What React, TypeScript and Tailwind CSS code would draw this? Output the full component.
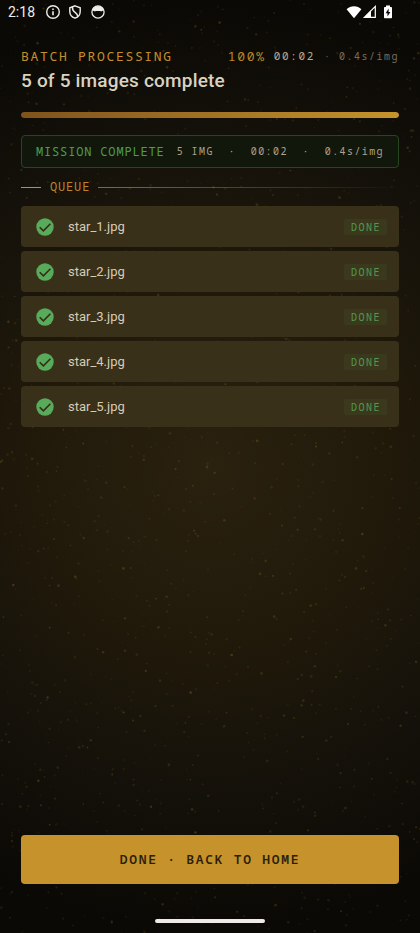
const MONO =
  "font-['Noto_Sans_Mono','Droid_Sans_Mono','DejaVu_Sans_Mono',monospace]"

interface QueueItem {
  id: number
  name: string
}

const QUEUE: QueueItem[] = [
  { id: 1, name: 'star_1.jpg' },
  { id: 2, name: 'star_2.jpg' },
  { id: 3, name: 'star_3.jpg' },
  { id: 4, name: 'star_4.jpg' },
  { id: 5, name: 'star_5.jpg' },
]

// small LCG so the dust is the same on every render
function makeDust(count: number) {
  let seed = 20417
  const next = () => {
    seed = (seed * 1103515245 + 12345) % 2147483648
    return seed / 2147483648
  }
  return Array.from({ length: count }, () => ({
    x: next() * 420,
    y: next() * 933,
    r: 0.7 + next() * 0.7,
    o: 0.06 + next() * next() * 0.24,
  }))
}

const DUST = makeDust(1500)

function Backdrop() {
  return (
    <svg
      className="absolute inset-0 -z-10 h-full w-full"
      viewBox="0 0 420 933"
      preserveAspectRatio="xMidYMid slice"
      aria-hidden="true"
    >
      {DUST.map((d, i) => (
        <circle key={i} cx={d.x} cy={d.y} r={d.r} fill="#a98a2c" opacity={d.o} />
      ))}
    </svg>
  )
}

function StatusBar() {
  return (
    <div className="flex h-6 items-center justify-between pl-2 pr-6 text-[#efece6]">
      <div className="flex items-center">
        <span className="w-[37px] text-sm leading-6">2:18</span>
        <svg className="h-4 w-4" viewBox="0 0 16 16" fill="none" stroke="currentColor">
          <circle cx="8" cy="8" r="6.3" strokeWidth="1.4" />
          <path d="M8 7.2v4M8 4.4v1.6" strokeWidth="1.6" />
        </svg>
        <svg className="ml-1.5 h-4 w-4" viewBox="0 0 16 16" fill="none" stroke="currentColor">
          <path d="M8 1.8l5.2 2v3.7c0 3.2-2.1 5.6-5.2 6.7-3.1-1.1-5.2-3.5-5.2-6.7V3.8z" strokeWidth="1.4" />
          <path d="M5.4 3c0 2.8.6 4 2.4 5.2 1.8 1.2 2.600 2.400 3.200 4.200" strokeWidth="1.5" />
        </svg>
        <svg className="ml-[7px] h-4 w-4" viewBox="0 0 16 16">
          <circle cx="8" cy="8" r="6.1" fill="none" stroke="currentColor" strokeWidth="1.3" />
          <path
            d="M3 4.600a6.200 6.200 0 0 1 10 0l.6 2.600-1.400-.5-1 .8-1.100-.6H5.900l-1.100.6-1-.8-1.400.5z"
            fill="currentColor"
          />
        </svg>
      </div>
      <div className="flex items-center text-white">
        <svg className="h-4 w-4" viewBox="0 0 16 16" fill="currentColor">
          <path d="M8 14.2L.6 5.2C2.6 3.3 5.2 2.2 8 2.2s5.4 1.1 7.4 3z" />
        </svg>
        <svg className="h-4 w-4" viewBox="0 0 16 16">
          <path d="M2.4 13.3L13.3 2.4v10.9z" fill="none" stroke="currentColor" strokeWidth="1.2" />
          <path d="M1.4 13.9L9 6.3v7.6z" fill="currentColor" />
        </svg>
        <svg className="ml-0.5 h-4 w-4" viewBox="0 0 16 16">
          <path
            d="M6 1.6h4v1.300h1.200c.5 0 .8.3.8.8v9.700c0 .5-.3.8-.8.8H4.800c-.5 0-.8-.3-.8-.8V3.700c0-.5.3-.8.8-.8H6z"
            fill="currentColor"
          />
          <path d="M8.600 4.600L5.600 9.200h1.900v3.300l2.900-4.600H8.600z" fill="#0b0905" />
        </svg>
      </div>
    </div>
  )
}

function CheckIcon() {
  return (
    <svg className="h-[18px] w-[18px] shrink-0" viewBox="0 0 18 18" aria-hidden="true">
      <circle cx="9" cy="9" r="8.7" fill="#59ab5c" />
      <path d="M3.700 9.200l3.700 3.600 7-7" fill="none" stroke="#352c18" strokeWidth="1.6" />
    </svg>
  )
}

function QueueRow({ item }: { item: QueueItem }) {
  return (
    <li className="flex h-[41px] items-center rounded bg-[#39301a] pl-[15px] pr-3">
      <CheckIcon />
      <span className="ml-3.5 min-w-0 flex-1 truncate text-[13px] leading-5 text-[#d6cbb5]">
        {item.name}
      </span>
      <span
        className={`${MONO} rounded-xs bg-[#3a391d] pl-[7px] pr-1.5 text-[10px] leading-4 tracking-[0.15em] text-[#539a50]`}
      >
        DONE
      </span>
    </li>
  )
}

export default function App() {
  return (
    <div className="relative isolate flex min-h-screen flex-col overflow-hidden bg-[#0b0905] bg-[radial-gradient(circle_460px_at_50%_50%,#2a210f_0%,#20190a_40%,#14110a_72%,#0b0905_100%)] font-[Roboto,sans-serif]">
      <Backdrop />
      <StatusBar />

      <main className="flex flex-1 flex-col px-[21px] pt-6">
        <header>
          <div className={`${MONO} flex items-center justify-between leading-4`}>
            <p className="text-[13px] leading-4 tracking-[0.13em] text-[#c38f2c]">BATCH PROCESSING</p>
            <p className="flex items-center whitespace-nowrap">
              <span className="text-[13px] leading-4 tracking-[0.13em] text-[#b98729]">100%</span>
              <span className="ml-2 text-[11px] leading-4 tracking-[0.15em] text-[#b5ab97]">00:02</span>
              <span className="mx-[9px] text-[10px] leading-4 text-[#5d584c]">·</span>
              <span className="text-[10px] leading-4 tracking-[0.15em] text-[#756e60]">0.4s/img</span>
            </p>
          </div>
          <h1 className="mt-[5px] text-[19px] leading-6 font-medium tracking-[0.01em] text-[#dad2c0]">
            5 of 5 images complete
          </h1>
        </header>

        <div
          role="progressbar"
          aria-label="Batch progress"
          aria-valuenow={100}
          className="mt-[19px] h-1.5 overflow-hidden rounded-full bg-[#2b210f]"
        >
          <div className="h-full w-full rounded-full bg-linear-to-r from-[#80531c] to-[#c6932c]" />
        </div>

        <section
          className={`${MONO} mt-[17px] flex h-[33px] items-center justify-between rounded border border-[#264622] bg-[#12170c] px-3.5 whitespace-nowrap`}
        >
          <span className="text-xs tracking-[0.07em] text-[#4f9c50]">MISSION COMPLETE</span>
          <span className="text-[10px] tracking-[0.14em] whitespace-pre text-[#aaa28e]">
            {'5 IMG  ·  00:02  ·  0.4s/img'}
          </span>
        </section>

        <div className="mt-[11px] flex items-center">
          <span className="h-px w-5 bg-[#c38f2c]" />
          <h2 className={`${MONO} mr-2 ml-[9px] text-xs leading-4 tracking-[0.07em] text-[#b98729]`}>
            QUEUE
          </h2>
          <span className="h-px flex-1 bg-linear-to-r from-[#93661e] to-transparent" />
        </div>

        <ul className="mt-[11px] flex flex-col gap-1">
          {QUEUE.map((item) => (
            <QueueRow key={item.id} item={item} />
          ))}
        </ul>

        <button
          type="button"
          className={`${MONO} mt-auto h-[49px] rounded bg-[#c6922b] text-[13px] font-semibold tracking-[0.13em] text-[#2b2009]`}
        >
          DONE · BACK TO HOME
        </button>
      </main>

      <div className="flex h-[49px] items-end justify-center pb-2.5">
        <div className="h-1 w-[110px] rounded-full bg-[#efeae8]" />
      </div>
    </div>
  )
}
